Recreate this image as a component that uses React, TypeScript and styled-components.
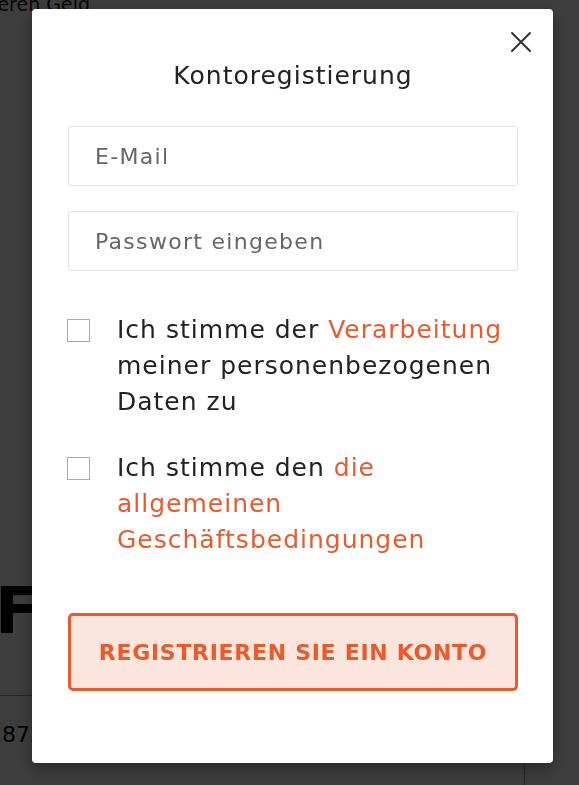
import styled, { createGlobalStyle } from "styled-components";
import { useState } from "react";

const GlobalStyle = createGlobalStyle`
  * { box-sizing: border-box; }
  html, body { margin: 0; padding: 0; }
  body {
    font-family: "DejaVu Sans", "Noto Sans", sans-serif;
    background: #ffffff;
    width: 579px;
    height: 785px;
    overflow: hidden;
  }
`;

export default function App() {
  const [privacy, setPrivacy] = useState(false);
  const [terms, setTerms] = useState(false);

  return (
    <>
      <GlobalStyle />
      <Page>
        <PageTop>Sparen Sie Ihr sicheren Geld</PageTop>
        <PageHeading>FINANZ</PageHeading>
        <PageCard>
          <CardNumber>1872</CardNumber>
        </PageCard>
      </Page>
      <Overlay>
        <Modal>
          <CloseButton aria-label="close">
            <svg width="22" height="22" viewBox="0 0 22 22">
              <path d="M2 2 L20 20 M20 2 L2 20" stroke="#333" strokeWidth="2" strokeLinecap="round" />
            </svg>
          </CloseButton>
          <Title>Kontoregistierung</Title>
          <Form onSubmit={(e) => e.preventDefault()}>
            <Input type="email" placeholder="E-Mail" />
            <Input type="password" placeholder="Passwort eingeben" />
            <Agreements>
              <Agreement>
                <Checkbox type="checkbox" checked={privacy} onChange={() => setPrivacy(!privacy)} />
                <AgreementText>
                  Ich stimme der <Link>Verarbeitung</Link> meiner personenbezogenen Daten zu
                </AgreementText>
              </Agreement>
              <Agreement>
                <Checkbox type="checkbox" checked={terms} onChange={() => setTerms(!terms)} />
                <AgreementText>
                  Ich stimme den <Link>die allgemeinen Geschäftsbedingungen</Link>
                </AgreementText>
              </Agreement>
            </Agreements>
            <Submit type="submit">Registrieren Sie ein Konto</Submit>
          </Form>
        </Modal>
      </Overlay>
    </>
  );
}

const Page = styled.div`
  height: 785px;
  display: flex;
  flex-direction: column;
`;

const PageTop = styled.div`
  width: 90px;
  margin-top: -7px;
  display: flex;
  justify-content: flex-end;
  white-space: nowrap;
  font-size: 19px;
  line-height: 22px;
  color: #111;
`;

const PageHeading = styled.h1`
  margin: 556px 0 0 -5px;
  font-size: 64px;
  font-weight: 700;
  letter-spacing: -3px;
  color: #000;
  line-height: 80px;
  white-space: nowrap;
`;

const PageCard = styled.div`
  margin-top: 44px;
  width: 525px;
  flex: 1;
  border-top: 1px solid #999;
  border-right: 1px solid #999;
  padding-top: 26px;
`;

const CardNumber = styled.div`
  margin-left: -12px;
  font-size: 22px;
  color: #000;
`;

const Overlay = styled.div`
  position: fixed;
  inset: 0;
  background: rgba(0, 0, 0, 0.76);
  padding: 9px 26px 22px 32px;
  display: flex;
`;

const Modal = styled.div`
  position: relative;
  width: 521px;
  height: 754px;
  background: #ffffff;
  border-radius: 4px;
  box-shadow: 0 6px 16px rgba(0, 0, 0, 0.35);
  padding: 47px 35px 0 36px;
`;

const CloseButton = styled.button`
  position: absolute;
  top: 22px;
  right: 21px;
  width: 22px;
  height: 22px;
  padding: 0;
  border: none;
  background: none;
  cursor: pointer;
  display: flex;
`;

const Title = styled.h2`
  margin: 0;
  text-align: center;
  font-size: 25px;
  font-weight: 400;
  letter-spacing: 1px;
  color: #222;
  line-height: 40px;
`;

const Form = styled.form`
  margin-top: 30px;
  display: flex;
  flex-direction: column;
`;

const Input = styled.input`
  height: 60px;
  width: 100%;
  border: 1px solid #e3e3e3;
  border-radius: 3px;
  padding: 0 26px;
  font-family: inherit;
  font-size: 22px;
  letter-spacing: 1.3px;
  color: #333;
  margin-bottom: 25px;
  outline: none;
  &::placeholder {
    color: #666;
  }
`;

const Agreements = styled.div`
  margin-top: 16px;
  display: flex;
  flex-direction: column;
  gap: 30px;
`;

const Agreement = styled.label`
  display: flex;
  align-items: flex-start;
  gap: 27px;
  cursor: pointer;
`;

const Checkbox = styled.input`
  appearance: none;
  flex: none;
  width: 23px;
  height: 23px;
  margin: 7px 0 0 -1px;
  border: 1px solid #aaa;
  background: #fff;
  &:checked {
    background: #e95a2c;
    border-color: #e95a2c;
  }
`;

const AgreementText = styled.span`
  font-size: 25px;
  letter-spacing: 1px;
  line-height: 36px;
  color: #222;
  max-width: 400px;
`;

const Link = styled.span`
  color: #e95a2c;
`;

const Submit = styled.button`
  margin-top: 55px;
  height: 78px;
  width: 100%;
  border: 3px solid #e95a2c;
  border-radius: 5px;
  background: #fce5dc;
  color: #e95a2c;
  font-family: inherit;
  font-size: 22px;
  font-weight: 700;
  letter-spacing: 0.7px;
  text-transform: uppercase;
  cursor: pointer;
`;
